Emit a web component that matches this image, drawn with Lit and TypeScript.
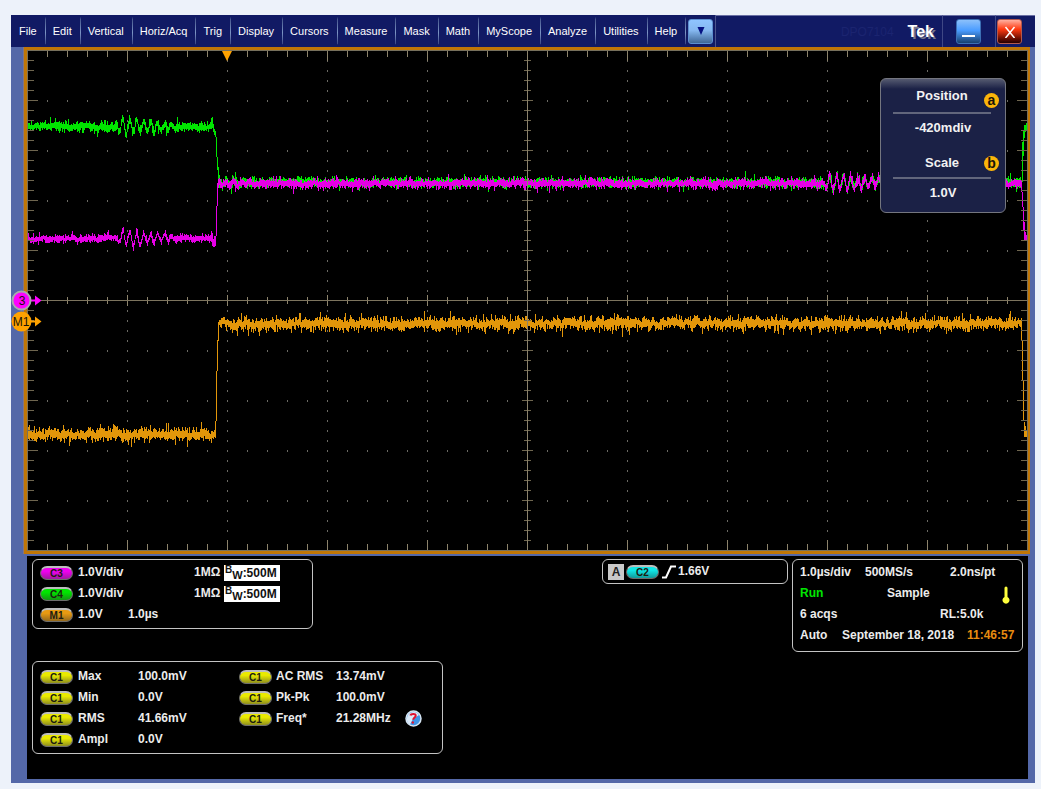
import { LitElement, html, svg, css, nothing } from "lit";
import { customElement } from "lit/decorators.js";

/* ---------- waveform generation ---------- */

function noise(seed: number) {
  let s = seed;
  return () => {
    s = (s * 1664525 + 1013904223) >>> 0;
    return s / 4294967296;
  };
}

type Ring = { from: number; to: number; amp: number; period: number };

/** One vertical bar per sample column, around a base level. */
function band(from: number, to: number, level: number, spread: number, seed: number, rings: Ring[] = []) {
  const rnd = noise(seed);
  let d = "";
  let wander = 0;
  for (let x = from; x < to; x++) {
    wander = wander * 0.5 + (rnd() - 0.5) * spread * 0.5;
    let offset = wander;
    for (const r of rings) {
      if (x >= r.from && x < r.to) {
        const t = (x - r.from) / (r.to - r.from);
        const swell = Math.min(1, 0.5 + t * 5) * (1 - t * 0.8);
        offset += Math.sin(((x - r.from) / r.period) * Math.PI * 2) * r.amp * swell * (0.75 + rnd() * 0.5);
      }
    }
    const spikeUp = rnd() > 0.94 ? rnd() * spread : 0;
    const spikeDown = rnd() > 0.94 ? rnd() * spread : 0;
    const up = Math.round(spread / 3 + rnd() * rnd() * spread + spikeUp);
    const down = Math.round(spread / 3 + rnd() * rnd() * spread + spikeDown);
    const y = Math.round(level + offset);
    d += `M${x + 0.5} ${y - up}V${y + down + 1}`;
  }
  return d;
}

const bars = (list: number[][]) => list.map(([x, a, b]) => `M${x + 0.5} ${a}V${b}`).join("");

const greenPath =
  band(0, 185, 76, 5, 11, [
    { from: 90, to: 150, amp: 9, period: 7 },
    { from: 150, to: 185, amp: 1, period: 9 },
  ]) +
  bars([[184, 68, 77], [185, 67, 78], [186, 74, 82], [187, 79, 85], [188, 81, 87], [189, 87, 107], [190, 107, 120], [191, 117, 132], [192, 125, 134]]) +
  band(192, 995, 132, 5, 57, [
    { from: 192, to: 245, amp: 4, period: 9 },
    { from: 797, to: 870, amp: 8, period: 7 },
  ]) +
  bars([[995, 92, 132], [996, 80, 106], [997, 75, 88], [998, 75, 82], [999, 73, 80], [1000, 74, 80]]);

const magentaPath =
  band(0, 185, 188, 4, 29, [
    { from: 90, to: 150, amp: 8, period: 7 },
    { from: 165, to: 185, amp: 1, period: 8 },
  ]) +
  bars([[184, 181, 192], [185, 183, 196], [186, 189, 197], [187, 186, 197], [188, 186, 196], [189, 156, 186], [190, 133, 156], [191, 129, 138]]) +
  band(192, 995, 133, 5, 83, [
    { from: 192, to: 235, amp: 3, period: 8 },
    { from: 797, to: 880, amp: 9, period: 7 },
  ]) +
  bars([[994, 130, 142], [995, 142, 157], [996, 157, 181], [997, 172, 190], [998, 182, 190], [999, 185, 190], [1000, 187, 190]]);

const orangePath =
  band(0, 188, 384, 7, 41) +
  bars([[188, 371, 388], [189, 321, 371], [190, 290, 321], [191, 272, 291]]) +
  band(192, 994, 273, 7, 97) +
  bars([[994, 268, 291], [995, 291, 331], [996, 331, 370], [997, 372, 387], [998, 376, 387], [999, 381, 387], [1000, 381, 387]]);

/* ---------- graticule ---------- */

function graticule() {
  let ticks = "";
  let dots = "";
  for (let i = 1; i < 50; i++) {
    const x = i * 20 + 0.5;
    const major = i % 5 === 0;
    ticks += `M${x} 1v${major ? 10 : 6}M${x} 500v${major ? -10 : -6}`;
    ticks += major ? `M${x} 245v11` : `M${x} 247v7`;
    for (let r = 1; r < 10; r++) if (r !== 5) dots += `M${x} ${r * 50}v2`;
  }
  let rungs = "";
  for (let j = 1; j < 50; j++) {
    const y = j * 10 + 0.5;
    const major = j % 5 === 0;
    rungs += `M1 ${y}h${major ? 10 : 6}M1000 ${y}h${major ? -10 : -6}`;
    rungs += major ? `M495 ${y}h11` : `M497 ${y}h7`;
    for (let c = 1; c < 10; c++) if (c !== 5) dots += `M${c * 100 + 0.5} ${j * 10}v2`;
  }
  return { ticks, rungs, dots };
}

const grid = graticule();

/* ---------- elements ---------- */

@customElement("scope-menu")
class ScopeMenu extends LitElement {
  static styles = css`
    :host {
      display: flex;
      align-items: stretch;
      height: 32px;
      background: #111a64;
      color: #fff;
      font-family: "Liberation Sans", Arial, sans-serif;
    }
    nav {
      display: flex;
      flex: none;
      border-right: 1px solid #4c548c;
      padding: 0 1px;
    }
    .item {
      border: 0;
      border-right: 1px solid;
      border-image: linear-gradient(#111a64 8%, #48588f 16%, #7c94c4 55%, #3b4785 88%, #111a64 90%) 1;
      background: none;
      color: inherit;
      font: 11px/32px "Liberation Sans", Arial, sans-serif;
      padding: 0 8px 0 7px;
      white-space: nowrap;
    }
    .key {
      align-self: center;
      box-sizing: border-box;
      width: 25px;
      height: 25px;
      border: 1px solid #5d8fd0;
      border-radius: 3px;
      padding: 0;
      display: grid;
      place-items: center;
      flex: none;
    }
    .more {
      margin: 0 1px 0 2px;
      background: linear-gradient(#8fc4ff, #86b8f0 45%, #3f6796);
    }
    .min {
      background: linear-gradient(#8cc0fa, #4a9cff 45%, #17406f);
      border-color: #3c6fb4;
    }
    .close {
      background: linear-gradient(#ffb0a0, #ff3a10 40%, #5a0a00 85%, #260000);
      border-color: #b3584c;
    }
    .brand {
      flex: 1;
      display: flex;
      justify-content: flex-end;
      align-items: center;
      gap: 14px;
      border-top: 1px solid #6a70a4;
      padding-right: 8px;
    }
    .model {
      color: #1b2470;
      font-size: 12px;
    }
    .tek {
      font-size: 16px;
      font-weight: bold;
      text-shadow: 2px 2px 0 #77788c;
    }
    .cell {
      display: flex;
      border-left: 1px solid #3f4885;
      border-top: 1px solid #6a70a4;
    }
    .cell-min {
      padding: 0 14px 0 13px;
    }
    .cell-close {
      padding: 0 13px 0 1px;
    }
  `;
  private items = ["File", "Edit", "Vertical", "Horiz/Acq", "Trig", "Display", "Cursors", "Measure", "Mask", "Math", "MyScope", "Analyze", "Utilities", "Help"];
  render() {
    return html`
      <nav>
        ${this.items.map((t) => html`<button class="item">${t}</button>`)}
        <button class="key more" aria-label="More menus">
          <svg width="8" height="8"><path d="M.5 0h7L4 8z" fill="#061282" /></svg>
        </button>
      </nav>
      <div class="brand"><span class="model">DPO7104</span><span class="tek">Tek</span></div>
      <div class="cell cell-min">
        <button class="key min" aria-label="Minimize">
          <svg width="13" height="12"><path d="M0 10h13" stroke="#fff" stroke-width="2" /></svg>
        </button>
      </div>
      <div class="cell cell-close">
        <button class="key close" aria-label="Close">
          <svg width="12" height="12"><path d="M1.5 1l9 11M10.500 1l-9 11" stroke="#fff" stroke-width="1.500" /></svg>
        </button>
      </div>
    `;
  }
}

@customElement("scope-plot")
class ScopePlot extends LitElement {
  static styles = css`
    :host {
      display: block;
      position: relative;
      background: #000;
      border: solid #c07606;
      border-width: 3px 2px 3px 3px;
      box-shadow: -1px 0 0 #85767e;
      font-family: "Liberation Sans", Arial, sans-serif;
    }
    .screen {
      display: block;
      width: 100%;
      height: auto;
      overflow: visible;
    }
    .crisp {
      shape-rendering: crispEdges;
      fill: none;
    }
    .tag {
      font-size: 12px;
      text-anchor: middle;
      fill: #1a1208;
    }
    .knobs {
      position: absolute;
      top: 28px;
      right: 22px;
      box-sizing: border-box;
      width: 126px;
      border: 1px solid #74767f;
      border-radius: 6px;
      background: linear-gradient(#555a70, #1b2146 10px);
      color: #f2f2f2;
      font-size: 13px;
      font-weight: bold;
      line-height: 16px;
      text-align: center;
      padding: 9px 12px 11px;
    }
    .knob {
      position: relative;
    }
    .knob + .knob {
      margin-top: 19px;
    }
    .name {
      border-bottom: 2px solid #62667c;
      padding-bottom: 8px;
      margin-right: 2px;
    }
    .knob + .knob .name {
      padding-bottom: 6px;
    }
    .value {
      padding-top: 6px;
    }
    .letter {
      position: absolute;
      right: -6px;
      top: 5px;
      width: 15px;
      height: 15px;
      border-radius: 50%;
      background: #fcb50a;
      color: #1a1408;
      font-size: 14px;
      line-height: 14px;
    }
    .knob + .knob .letter {
      top: 1px;
    }
  `;
  render() {
    return html`
      <svg class="screen" viewBox="0 0 1001 501" role="img" aria-label="Waveform display">
        <g class="crisp">
          <path d=${grid.dots} stroke="#6b6a64" />
          <path d=${greenPath} stroke="#00e600" />
          <path d=${magentaPath} stroke="#e600e6" />
          <path d=${orangePath} stroke="#e2960a" />
          <path d=${grid.ticks} stroke="#8c836c" />
          <path d=${grid.rungs} stroke="#6f664f" />
          <path d="M500.500 0V501" stroke="#8c836c" />
          <path d="M0 250.500H1001" stroke="#7d745e" />
          <path d="M.5 .5H1000.500V500.500H.5z" stroke="#77705c" />
        </g>
        <path d="M195 1h10l-5 10z" fill="#ffa200" />
        <g>
          <path d="M4 249.500h4v-4l6.500 5-6.500 5v-4H4z" fill="#ff00ff" />
          <circle cx="-5.500" cy="250.500" r="9" fill="#ff00ff" stroke="#a9a9ad" stroke-width="2" />
          <text class="tag" x="-5" y="255">3</text>
          <path d="M4 270.500h4v-4l6.500 5-6.500 5v-4H4z" fill="#ffa200" />
          <circle cx="-5.500" cy="271.500" r="10" fill="#ffa200" />
          <text class="tag" x="-6" y="276">M1</text>
        </g>
      </svg>
      <aside class="knobs">
        <div class="knob"><div class="name">Position</div><div class="value">-420mdiv</div><span class="letter">a</span></div>
        <div class="knob"><div class="name">Scale</div><div class="value">1.0V</div><span class="letter">b</span></div>
      </aside>
    `;
  }
}

const pill = (label: string, kind: string) => html`<span class="pill ${kind}">${label}</span>`;
const bandwidth = html`<span class="bw"><span class="b">B</span><span class="w">W</span>:500M</span>`;

@customElement("scope-readouts")
class ScopeReadouts extends LitElement {
  static styles = css`
    :host {
      display: block;
      background: #000;
      color: #ececec;
      font: bold 12px/21px "Liberation Sans", Arial, sans-serif;
      padding: 3px 5px 25px;
    }
    .top {
      display: flex;
      align-items: flex-start;
      gap: 4px;
      margin-bottom: 9px;
    }
    .box {
      box-sizing: border-box;
      border: 1px solid #c4c4c4;
      border-radius: 6px;
      padding: 2px 7px 3px;
      white-space: nowrap;
    }
    .channels {
      width: 281px;
      margin-right: auto;
    }
    .trigger {
      width: 186px;
      display: flex;
      align-items: center;
      padding: 1px 5px;
    }
    .timebase {
      width: 231px;
      padding-bottom: 5px;
    }
    .measures {
      width: 411px;
      padding: 4px 7px 3px;
    }
    table {
      border-collapse: collapse;
      table-layout: fixed;
      width: 100%;
    }
    td {
      padding: 0;
      height: 21px;
      font-weight: bold;
    }
    .c30 { width: 30px; }
    .c37 { width: 37px; }
    .c38 { width: 38px; }
    .c50 { width: 50px; }
    .c60 { width: 60px; }
    .c66 { width: 66px; }
    .c69 { width: 69px; }
    .c101 { width: 101px; }
    .pill {
      display: block;
      box-sizing: border-box;
      width: 33px;
      height: 14px;
      border-radius: 7px;
      border: 1px solid #6d6d6d;
      border-top: 2px solid #bdbdbd;
      color: #1c1c10;
      font-size: 10px;
      line-height: 12px;
      text-align: center;
    }
    .magenta { background: linear-gradient(#f000f0 30%, #a01aa0); }
    .green { background: linear-gradient(#00e600 30%, #149414); }
    .orange { background: linear-gradient(#e89a12 30%, #94691c); }
    .yellow { background: linear-gradient(#eaea00 30%, #8f8f1e); }
    .cyan { background: linear-gradient(#10e6e6 30%, #109a9a); }
    .bw {
      display: flex;
      box-sizing: border-box;
      width: 56px;
      height: 16px;
      background: #fff;
      color: #111;
      line-height: 16px;
    }
    .b {
      font-size: 10px;
      line-height: 9px;
      padding-left: 1px;
    }
    .w {
      font-size: 11px;
      line-height: 20px;
    }
    .source {
      width: 16px;
      height: 16px;
      background: #c9c9c9;
      color: #222;
      line-height: 16px;
      text-align: center;
      margin-right: 2px;
    }
    .edge {
      margin: 0 2px 0 3px;
    }
    .row {
      display: grid;
    }
    .r1 { grid-template-columns: 65px 85px auto; }
    .r2 { grid-template-columns: 87px 115px auto; }
    .r3 { grid-template-columns: 140px auto; }
    .r4 { grid-template-columns: 42px 125px auto; }
    .run { color: #00e600; }
    .time { color: #e88c10; }
    .thermo { align-self: end; }
    svg { display: block; }
  `;
  private measures = [
    ["Max", "100.0mV", "AC RMS", "13.74mV"],
    ["Min", "0.0V", "Pk-Pk", "100.0mV"],
    ["RMS", "41.66mV", "Freq*", "21.28MHz"],
    ["Ampl", "0.0V", "", ""],
  ];
  private help = svg`<svg width="17" height="17" viewBox="0 0 17 17">
    <circle cx="8.500" cy="8.500" r="7.500" fill="#3f93e6" stroke="#d5e4f2" stroke-width="1.500" />
    <path d="M2 8a6.500 6.500 0 0 1 12-3L8 9l-3 5.500A6.500 6.500 0 0 1 2 8z" fill="#dbeafa" />
    <path d="M5.500 5.500c.5-2.200 5.500-2.200 5.200.3-.2 1.700-2.400 1.800-2.500 4" fill="none" stroke="#e01030" stroke-width="2" />
    <circle cx="7.800" cy="12.500" r="1.200" fill="#e01030" />
  </svg>`;
  render() {
    return html`
      <div class="top">
        <section class="box channels">
          <table>
            <colgroup><col class="c38" /><col class="c50" /><col class="c66" /><col class="c30" /><col /></colgroup>
            <tr><td>${pill("C3", "magenta")}</td><td>1.0V/div</td><td></td><td>1MΩ</td><td>${bandwidth}</td></tr>
            <tr><td>${pill("C4", "green")}</td><td>1.0V/div</td><td></td><td>1MΩ</td><td>${bandwidth}</td></tr>
            <tr><td>${pill("M1", "orange")}</td><td>1.0V</td><td>1.0µs</td><td></td><td></td></tr>
          </table>
        </section>
        <section class="box trigger">
          <span class="source">A</span>${pill("C2", "cyan")}
          <svg class="edge" width="14" height="14"><path d="M0 12.500h4L9 1.500h5" fill="none" stroke="#fff" stroke-width="2" /></svg>
          <span>1.66V</span>
        </section>
        <section class="box timebase">
          <div class="row r1"><span>1.0µs/div</span><span>500MS/s</span><span>2.0ns/pt</span></div>
          <div class="row r2">
            <span class="run">Run</span><span>Sample</span>
            <svg class="thermo" width="8" height="18"><path d="M2.500 2a1.500 1.500 0 0 1 3 0v9a3.500 3.500 0 1 1-3 0z" fill="#ffff3c" /></svg>
          </div>
          <div class="row r3"><span>6 acqs</span><span>RL:5.0k</span></div>
          <div class="row r4"><span>Auto</span><span>September 18, 2018</span><span class="time">11:46:57</span></div>
        </section>
      </div>
      <section class="box measures">
        <table>
          <colgroup><col class="c38" /><col class="c60" /><col class="c101" /><col class="c37" /><col class="c60" /><col class="c69" /><col /></colgroup>
          ${this.measures.map(
            ([a, b, c, d]) => html`<tr>
              <td>${pill("C1", "yellow")}</td><td>${a}</td><td>${b}</td>
              <td>${c ? pill("C1", "yellow") : nothing}</td><td>${c}</td><td>${d}</td>
              <td>${c === "Freq*" ? this.help : nothing}</td>
            </tr>`
          )}
        </table>
      </section>
    `;
  }
}

@customElement("app-root")
class AppRoot extends LitElement {
  static styles = css`
    :host {
      display: block;
      box-sizing: border-box;
      min-height: 100vh;
      padding: 15px 6px 6px 11px;
      background: #edf2fa;
    }
    .window {
      background: #5468a8;
      padding-bottom: 4px;
    }
    .plot {
      margin: 0 5px 2px 13px;
    }
    .readouts {
      margin: 0 7px 0 16px;
    }
  `;
  render() {
    return html`
      <main class="window">
        <scope-menu></scope-menu>
        <scope-plot class="plot"></scope-plot>
        <scope-readouts class="readouts"></scope-readouts>
      </main>
    `;
  }
}
